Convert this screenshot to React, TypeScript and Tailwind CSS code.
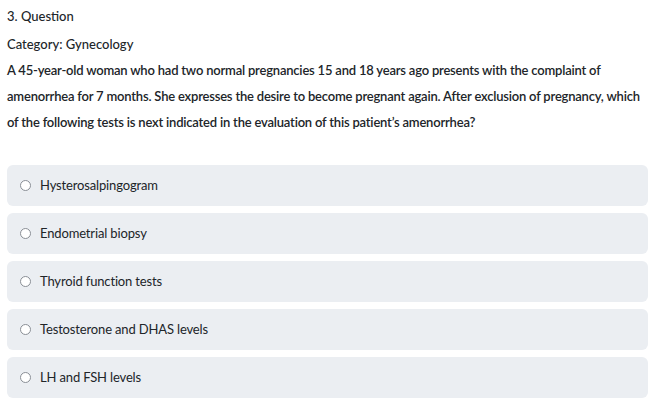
import React from 'react';

const options = [
  'Hysterosalpingogram',
  'Endometrial biopsy',
  'Thyroid function tests',
  'Testosterone and DHAS levels',
  'LH and FSH levels',
];

const App: React.FC = () => {
  return (
    <div className="bg-white text-[#212529] px-[7px] pt-[6px] font-['Lato',sans-serif]">
      <p className="text-[13px] leading-[20px] font-medium">3. Question</p>
      <p className="text-[13px] leading-[20px] font-medium mt-[8px]">Category: Gynecology</p>
      <p className="text-[13px] leading-[26px] font-semibold mt-[3px] tracking-[-0.2px]">
        A 45-year-old woman who had two normal pregnancies 15 and 18 years ago presents with the complaint of
        amenorrhea for 7 months. She expresses the desire to become pregnant again. After exclusion of pregnancy, which
        of the following tests is next indicated in the evaluation of this patient’s amenorrhea?
      </p>
      <div className="mt-[30px] flex flex-col gap-[7px]">
        {options.map((opt) => (
          <div key={opt} className="h-[41px] rounded-[6px] bg-[#ebeef2] flex items-center pl-[13px]">
            <span className="w-[11px] h-[11px] rounded-full border border-[#8a8f96] bg-white" />
            <span className="ml-[9px] text-[13px] tracking-[-0.15px]">{opt}</span>
          </div>
        ))}
      </div>
    </div>
  );
};

export default App;
